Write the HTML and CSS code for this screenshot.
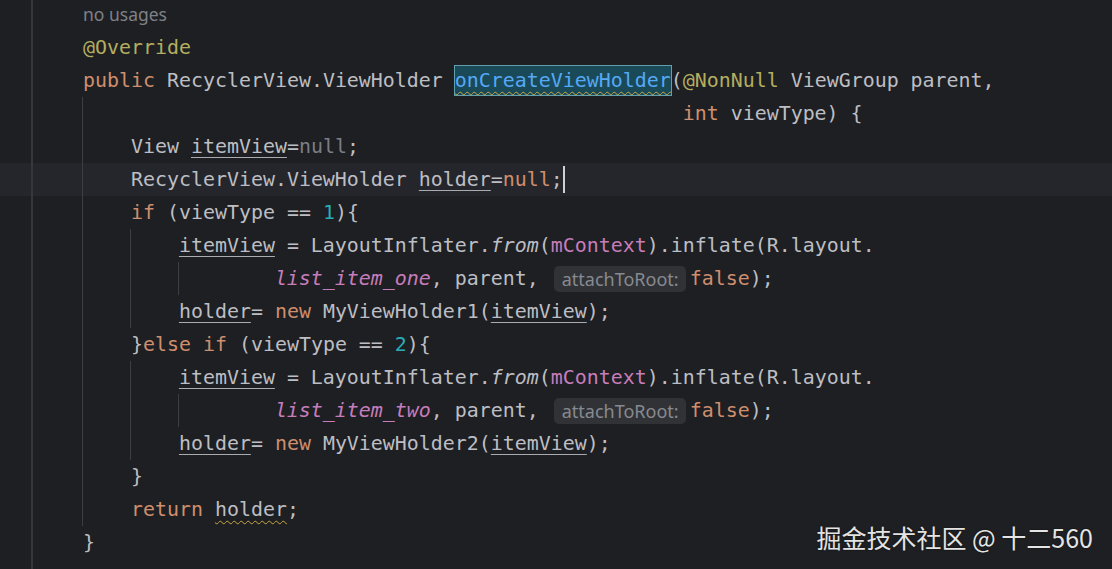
FILE: index.html
```html
<!DOCTYPE html>
<html lang="zh-CN">
<head>
<meta charset="utf-8">
<title>Editor</title>
<link rel="stylesheet" href="styles.css">
</head>
<body>
<div class="editor">
  <div class="row hint"><span class="gut"></span><div class="txt">no usages</div></div>
  <div class="row"><span class="gut"></span><div class="txt"><span class="a">@Override</span></div></div>
  <div class="row"><span class="gut"></span><div class="txt"><span class="k">public</span> RecyclerView.ViewHolder <span class="decl">onCreateViewHolder</span>(<span class="a">@NonNull</span> ViewGroup parent,</div></div>
  <div class="row"><span class="gut"></span><div class="txt"><span class="ind g"></span><span class="pad46"></span><span class="k">int</span> viewType) {</div></div>
  <div class="row"><span class="gut"></span><div class="txt"><span class="ind g"></span>View <span class="u">itemView</span>=<span class="dim">null</span>;</div></div>
  <div class="row cur"><span class="gut"></span><div class="txt"><span class="ind g"></span>RecyclerView.ViewHolder <span class="u">holder</span>=<span class="k">null</span>;<span class="caret"></span></div></div>
  <div class="row"><span class="gut"></span><div class="txt"><span class="ind g"></span><span class="k">if</span> (viewType == <span class="n">1</span>){</div></div>
  <div class="row"><span class="gut"></span><div class="txt"><span class="ind g"></span><span class="ind g"></span><span class="u">itemView</span> = LayoutInflater.<span class="it">from</span>(<span class="f">mContext</span>).inflate(R.layout.</div></div>
  <div class="row"><span class="gut"></span><div class="txt"><span class="ind g"></span><span class="ind g"></span><span class="ind g"></span><span class="ind"></span><span class="fi">list_item_one</span>, parent, <span class="inlay">attachToRoot:</span><span class="k">false</span>);</div></div>
  <div class="row"><span class="gut"></span><div class="txt"><span class="ind g"></span><span class="ind g"></span><span class="u">holder</span>= <span class="k">new</span> MyViewHolder1(<span class="u">itemView</span>);</div></div>
  <div class="row"><span class="gut"></span><div class="txt"><span class="ind g"></span>}<span class="k">else if</span> (viewType == <span class="n">2</span>){</div></div>
  <div class="row"><span class="gut"></span><div class="txt"><span class="ind g"></span><span class="ind g"></span><span class="u">itemView</span> = LayoutInflater.<span class="it">from</span>(<span class="f">mContext</span>).inflate(R.layout.</div></div>
  <div class="row"><span class="gut"></span><div class="txt"><span class="ind g"></span><span class="ind g"></span><span class="ind g"></span><span class="ind"></span><span class="fi">list_item_two</span>, parent, <span class="inlay">attachToRoot:</span><span class="k">false</span>);</div></div>
  <div class="row"><span class="gut"></span><div class="txt"><span class="ind g"></span><span class="ind g"></span><span class="u">holder</span>= <span class="k">new</span> MyViewHolder2(<span class="u">itemView</span>);</div></div>
  <div class="row"><span class="gut"></span><div class="txt"><span class="ind g"></span>}</div></div>
  <div class="row"><span class="gut"></span><div class="txt"><span class="ind g"></span><span class="k">return</span> <span class="w">holder</span>;</div></div>
  <div class="row"><span class="gut"></span><div class="txt">}</div></div>
  <div class="row fill"><span class="gut"></span><div class="txt"></div></div>
  <div class="wm">掘金技术社区 @ 十二560</div>
</div>
</body>
</html>
```

FILE: styles.css
```css
* { box-sizing: border-box; }
html, body { margin: 0; height: 100%; }
body { background: #1e1f22; overflow: hidden; }

.editor {
  position: relative;
  height: 569px;
  display: flex;
  flex-direction: column;
  font-family: "DejaVu Sans Mono", monospace;
  font-size: 19.93px;
  color: #bcbec4;
}

.row { display: flex; height: 33px; flex: none; }
.row.hint { height: 31px; }
.row.cur { background: #25262b; }
.row.fill { flex: 1; height: auto; }

.gut {
  width: 33px;
  flex: none;
  border-right: 2px solid #35373b;
}

.txt {
  flex: 1;
  padding-left: 50px;
  white-space: pre;
  line-height: 33px;
  height: 100%;
}

.hint .txt {
  font-family: "Noto Sans", sans-serif;
  font-size: 17.5px;
  line-height: 29px;
  color: #7e8187;
}

.ind {
  display: inline-block;
  box-sizing: content-box;
  width: 4ch;
  height: 33px;
  vertical-align: top;
  margin-left: -1px;
  border-left: 1px solid transparent;
}
.ind.g { border-left-color: #3c3e43; }

.pad46 { display: inline-block; width: 46ch; height: 1px; }

.k { color: #cf8e6d; }
.a { color: #b3ae60; }
.n { color: #2aacb8; }
.f { color: #c77dbb; }
.fi { color: #c77dbb; font-style: italic; }
.it { font-style: italic; }
.dim { color: #7a7e85; }

.u {
  text-decoration: underline;
  text-decoration-thickness: 1px;
  text-underline-offset: 4px;
  text-decoration-color: #a9abb1;
}

.w {
  text-decoration: underline wavy #c9a742;
  text-decoration-thickness: 1px;
  text-underline-offset: 4px;
}

.decl {
  display: inline-block;
  color: #56a8f5;
  background: #1a4a58;
  border: 1px solid #5f9fb0;
  line-height: 29px;
  margin: 0 -1px;
  text-decoration: underline wavy #c9a742;
  text-decoration-thickness: 1px;
  text-underline-offset: 4px;
}

.caret {
  display: inline-block;
  width: 2px;
  height: 27px;
  margin-top: 3px;
  margin-right: -2px;
  vertical-align: top;
  background: #ced0d6;
}

.inlay {
  display: inline-block;
  font-family: "Noto Sans", sans-serif;
  font-size: 18px;
  color: #878a90;
  background: #313236;
  border-radius: 5px;
  padding: 0 7px 0 8px;
  height: 26px;
  line-height: 26px;
  vertical-align: top;
  margin: 3.5px 4px 0 3px;
}

.wm {
  position: absolute;
  right: 19px;
  bottom: 19px;
  font-family: "Noto Sans CJK SC", sans-serif;
  font-size: 25px;
  line-height: 1;
  color: #e4e4e4;
  text-shadow: 0 0 2px rgba(0, 0, 0, 0.6);
}
```
